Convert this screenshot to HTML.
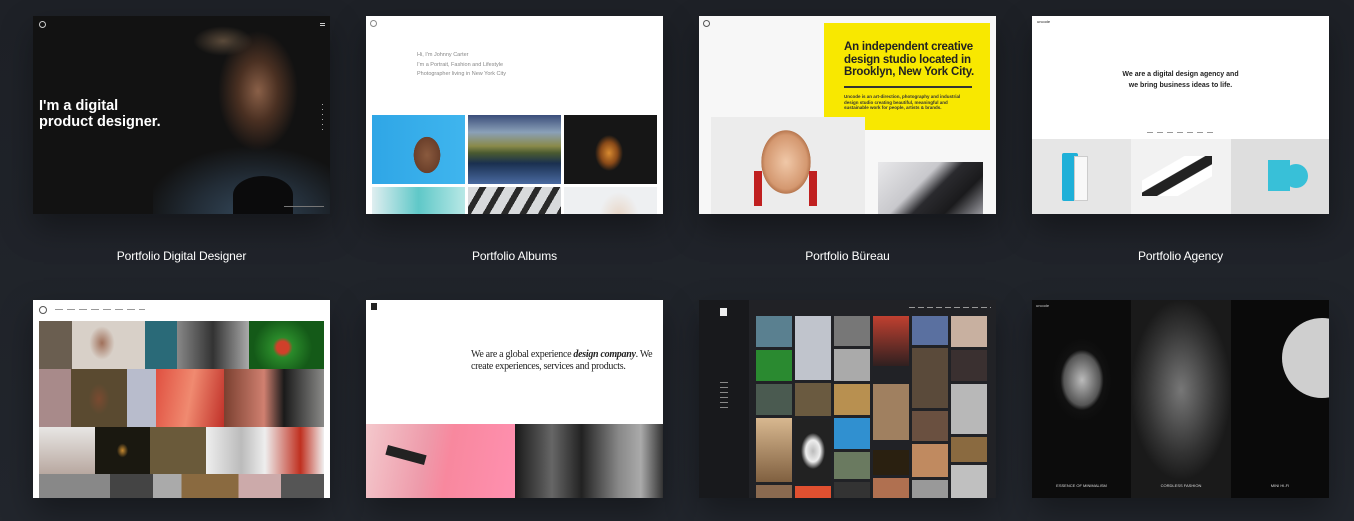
<!DOCTYPE html>
<html><head><meta charset="utf-8"><style>
*{margin:0;padding:0;box-sizing:border-box}
body{width:1354px;height:521px;overflow:hidden;background:linear-gradient(#1e2127,#22262d);font-family:"Liberation Sans",sans-serif;position:relative}
.c{position:absolute;width:297px;height:198px;overflow:hidden;box-shadow:0 14px 30px rgba(0,0,0,.35)}
.a{position:absolute}
.lbl{position:absolute;top:249px;width:297px;text-align:center;color:#fff;font-size:12px;letter-spacing:-.1px}
.t{position:absolute;white-space:nowrap}
</style></head><body>

<!-- Card 1 -->
<div class="c" style="left:33px;top:16px;background:#121212">
 <div class="a" style="left:120px;top:0;width:177px;height:198px;background:radial-gradient(ellipse 40px 60px at 105px 75px,#8a6048 0%,#4a3022 50%,rgba(20,16,14,0) 100%),radial-gradient(ellipse 110px 70px at 100px 200px,#34485a 0%,#222c36 55%,rgba(18,18,18,0) 100%)"></div>
 <div class="a" style="left:160px;top:10px;width:60px;height:30px;border-radius:50%;background:radial-gradient(#5a4a3a,rgba(0,0,0,0) 70%)"></div>
 <div class="a" style="left:200px;top:160px;width:60px;height:38px;border-radius:50% 50% 0 0;background:#0b0b0c"></div>
 <div class="t" style="left:6px;top:82px;color:#fff;font-weight:bold;font-size:14.5px;line-height:16px">I'm a digital<br>product designer.</div>
 <div class="a" style="left:6px;top:5px;width:7px;height:7px;border:1px solid #ccc;border-radius:50%"></div>
 <div class="a" style="left:287px;top:7px;width:5px;height:3px;border-top:1px solid #ccc;border-bottom:1px solid #ccc"></div>
 <div class="a" style="left:289px;top:88px;width:1px;height:26px;background:repeating-linear-gradient(#aaa 0 1px,transparent 1px 5px)"></div>
 <div class="a" style="left:251px;top:190px;width:40px;height:1px;background:#777"></div>
</div>
<div class="lbl" style="left:33px">Portfolio Digital Designer</div>

<!-- Card 2 -->
<div class="c" style="left:366px;top:16px;background:#fff">
 <div class="a" style="left:4px;top:4px;width:7px;height:7px;border:1px solid #888;border-radius:50%"></div>
 <div class="t" style="left:51px;top:35px;color:#888;font-size:5.5px;line-height:9.5px">Hi, I'm Johnny Carter<br>I'm a Portrait, Fashion and Lifestyle<br>Photographer living in New York City</div>
 <div class="a" style="left:6px;top:99px;width:93px;height:69px;background:radial-gradient(ellipse 22px 30px at 55px 40px,#8a5a3e,#6a3f2a 60%,rgba(0,0,0,0) 61%),linear-gradient(90deg,#2fa6e6,#3fb5ee)"></div>
 <div class="a" style="left:102px;top:99px;width:93px;height:69px;background:linear-gradient(#3a4d7a 0%,#8aa0b8 25%,#8a8a4a 45%,#4a5a30 55%,#1a3050 70%,#4a6aa0 100%)"></div>
 <div class="a" style="left:198px;top:99px;width:93px;height:69px;background:radial-gradient(ellipse 14px 18px at 45px 38px,#d88a30,#8a4a18 60%,#161616 100%)"></div>
 <div class="a" style="left:6px;top:171px;width:93px;height:27px;background:linear-gradient(90deg,#dfeef0,#5fc8c8,#b8e8e6)"></div>
 <div class="a" style="left:102px;top:171px;width:93px;height:27px;background:repeating-linear-gradient(120deg,#d8dadc 0 10px,#2a2a2a 10px 16px)"></div>
 <div class="a" style="left:198px;top:171px;width:93px;height:27px;background:radial-gradient(ellipse 20px 25px at 55px 30px,#e8d5c5,#eef0f2)"></div>
</div>
<div class="lbl" style="left:366px">Portfolio Albums</div>

<!-- Card 3 -->
<div class="c" style="left:699px;top:16px;background:#f7f7f7">
 <div class="a" style="left:4px;top:4px;width:7px;height:7px;border:1px solid #555;border-radius:50%"></div>
 <div class="a" style="left:125px;top:7px;width:166px;height:107px;background:#f8e800"></div>
 <div class="t" style="left:145px;top:25px;color:#222;font-weight:bold;font-size:11.5px;line-height:12.5px;letter-spacing:-.2px">An independent creative<br>design studio located in<br>Brooklyn, New York City.</div>
 <div class="a" style="left:145px;top:70px;width:128px;height:1.5px;background:#333"></div>
 <div class="t" style="left:145px;top:78px;color:#333;font-size:4.5px;line-height:5.5px;font-weight:bold">Uncode is an art-direction, photography and industrial<br>design studio creating beautiful, meaningful and<br>sustainable work for people, artists &amp; brands.</div>
 <div class="a" style="left:12px;top:101px;width:154px;height:97px;background:radial-gradient(ellipse 35px 45px at 75px 45px,#f0c8a8,#d49870 60%,#b87850 70%,rgba(0,0,0,0) 71%),#ececec"></div>
 <div class="a" style="left:55px;top:155px;width:8px;height:35px;background:#c02020"></div>
 <div class="a" style="left:110px;top:155px;width:8px;height:35px;background:#c02020"></div>
 <div class="a" style="left:179px;top:146px;width:105px;height:52px;background:linear-gradient(135deg,#e8e8ea 0%,#c8c8cc 40%,#2a2a2e 55%,#1a1a1c 75%,#9a9aa0 100%)"></div>
</div>
<div class="lbl" style="left:699px">Portfolio Büreau</div>

<!-- Card 4 -->
<div class="c" style="left:1032px;top:16px;background:#fff">
 <div class="t" style="left:5px;top:3px;font-size:4px;color:#222">uncode</div>
 <div class="t" style="left:0;width:297px;text-align:center;top:53px;color:#222;font-size:7px;line-height:11px;font-weight:bold">We are a digital design agency and<br>we bring business ideas to life.</div>
 <div class="a" style="left:115px;top:116px;width:70px;height:1px;background:repeating-linear-gradient(90deg,#999 0 6px,transparent 6px 10px)"></div>
 <div class="a" style="left:0;top:123px;width:99px;height:75px;background:#e6e6e6"></div>
 <div class="a" style="left:30px;top:137px;width:16px;height:48px;background:#1fb0d8;border-radius:2px"></div>
 <div class="a" style="left:42px;top:140px;width:14px;height:45px;background:#f8f8f8;border:1px solid #ccc"></div>
 <div class="a" style="left:99px;top:123px;width:100px;height:75px;background:#f2f2f2"></div>
 <div class="a" style="left:110px;top:140px;width:70px;height:40px;background:linear-gradient(150deg,transparent 30%,#fff 31% 45%,#222 46% 60%,#fff 61% 75%,transparent 76%)"></div>
 <div class="a" style="left:199px;top:123px;width:98px;height:75px;background:#dedede"></div>
 <div class="a" style="left:236px;top:144px;width:22px;height:31px;background:#38c0d8"></div>
 <div class="a" style="left:252px;top:148px;width:24px;height:24px;border-radius:50%;background:#38c0d8"></div>
</div>
<div class="lbl" style="left:1032px">Portfolio Agency</div>

<!-- Card 5 -->
<div class="c" style="left:33px;top:300px;background:#fff">
 <div class="a" style="left:6px;top:6px;width:8px;height:8px;border:1px solid #555;border-radius:50%"></div>
 <div class="a" style="left:22px;top:9px;width:90px;height:1px;background:repeating-linear-gradient(90deg,#999 0 8px,transparent 8px 12px)"></div>
 <div class="a" style="left:6px;top:21px;width:33px;height:48px;background:#6a5e50"></div>
 <div class="a" style="left:39px;top:21px;width:73px;height:48px;background:radial-gradient(ellipse 18px 24px at 30px 22px,#a0705a,#d8d0c8 70%)"></div>
 <div class="a" style="left:112px;top:21px;width:32px;height:48px;background:#2a6a78"></div>
 <div class="a" style="left:144px;top:21px;width:72px;height:48px;background:linear-gradient(90deg,#888,#333 50%,#aaa)"></div>
 <div class="a" style="left:216px;top:21px;width:75px;height:48px;background:radial-gradient(circle at 45% 55%,#d0402a 0 6px,#2a8a2a 10px,#145a18 60%)"></div>
 <div class="a" style="left:6px;top:69px;width:32px;height:58px;background:#a88a8a"></div>
 <div class="a" style="left:38px;top:69px;width:56px;height:58px;background:radial-gradient(ellipse 15px 22px at 28px 30px,#7a4a30,#5a4a30 70%)"></div>
 <div class="a" style="left:94px;top:69px;width:29px;height:58px;background:#b8bccc"></div>
 <div class="a" style="left:123px;top:69px;width:68px;height:58px;background:linear-gradient(100deg,#e05040,#f08a70 50%,#c03028)"></div>
 <div class="a" style="left:191px;top:69px;width:100px;height:58px;background:linear-gradient(90deg,#7a4030,#d08070 40%,#1a1a1a 60%,#8a8a88)"></div>
 <div class="a" style="left:6px;top:127px;width:56px;height:47px;background:linear-gradient(#e8e6e4,#b8a8a0)"></div>
 <div class="a" style="left:62px;top:127px;width:55px;height:47px;background:radial-gradient(ellipse 8px 10px,#c88a30,#1a1810 70%)"></div>
 <div class="a" style="left:117px;top:127px;width:56px;height:47px;background:#6a5a3a"></div>
 <div class="a" style="left:173px;top:127px;width:118px;height:47px;background:linear-gradient(90deg,#eee,#bbb 30%,#eee 50%,#c03020 80%,#f0f0f0)"></div>
 <div class="a" style="left:6px;top:174px;width:285px;height:24px;background:linear-gradient(90deg,#888 0 25%,#444 25% 40%,#aaa 40% 50%,#8a6a40 50% 70%,#caa 70% 85%,#555 85%)"></div>
</div>

<!-- Card 6 -->
<div class="c" style="left:366px;top:300px;background:#fff">
 <div class="a" style="left:5px;top:3px;width:6px;height:7px;background:#222"></div>
 <div class="t" style="left:105px;top:49px;font-family:'Liberation Serif',serif;font-size:10px;line-height:11.5px;color:#222;letter-spacing:-.3px">We are a global experience <b><i>design company</i></b>. We<br>create experiences, services and products.</div>
 <div class="a" style="left:0;top:124px;width:149px;height:74px;background:linear-gradient(100deg,#f4c8cc 0%,#ee9aaa 40%,#f8889e 55%,#ff90b0 100%)"></div>
 <div class="a" style="left:20px;top:150px;width:40px;height:10px;background:#222;transform:rotate(15deg)"></div>
 <div class="a" style="left:149px;top:124px;width:148px;height:74px;background:linear-gradient(90deg,#1a1a1a,#666 25%,#222 45%,#888 70%,#aaa 85%,#333)"></div>
</div>

<!-- Card 7 -->
<div class="c" style="left:699px;top:300px;background:#212226">
 <div class="a" style="left:0;top:0;width:50px;height:198px;background:#18191c"></div>
 <div class="a" style="left:21px;top:8px;width:7px;height:8px;background:#eee"></div>
 <div class="a" style="left:21px;top:82px;width:8px;height:30px;background:repeating-linear-gradient(#888 0 1px,transparent 1px 5px)"></div>
 <div class="a" style="left:210px;top:7px;width:82px;height:1px;background:repeating-linear-gradient(90deg,#999 0 6px,transparent 6px 9px)"></div>
 <div class="a" style="left:57px;top:16px;width:36px;height:31px;background:#5a8090"></div>
 <div class="a" style="left:57px;top:50px;width:36px;height:31px;background:#2a8a30"></div>
 <div class="a" style="left:57px;top:84px;width:36px;height:31px;background:#4a5a50"></div>
 <div class="a" style="left:57px;top:118px;width:36px;height:64px;background:linear-gradient(#d8b890,#806040)"></div>
 <div class="a" style="left:57px;top:185px;width:36px;height:13px;background:#8a6a50"></div>
 <div class="a" style="left:96px;top:16px;width:36px;height:64px;background:#c0c4cc"></div>
 <div class="a" style="left:96px;top:83px;width:36px;height:33px;background:#6a5a40"></div>
 <div class="a" style="left:96px;top:119px;width:36px;height:64px;background:radial-gradient(ellipse 12px 18px,#bbb,#eee 60%,#222)"></div>
 <div class="a" style="left:96px;top:186px;width:36px;height:12px;background:#e05030"></div>
 <div class="a" style="left:135px;top:16px;width:36px;height:30px;background:#777"></div>
 <div class="a" style="left:135px;top:49px;width:36px;height:32px;background:#aaa"></div>
 <div class="a" style="left:135px;top:84px;width:36px;height:31px;background:#b89050"></div>
 <div class="a" style="left:135px;top:118px;width:36px;height:31px;background:#3090d0"></div>
 <div class="a" style="left:135px;top:152px;width:36px;height:27px;background:#6a7a60"></div>
 <div class="a" style="left:135px;top:182px;width:36px;height:16px;background:#333"></div>
 <div class="a" style="left:174px;top:16px;width:36px;height:50px;background:linear-gradient(#c04030,#302020)"></div>
 <div class="a" style="left:174px;top:84px;width:36px;height:56px;background:#a08060"></div>
 <div class="a" style="left:174px;top:150px;width:36px;height:25px;background:#2a2010"></div>
 <div class="a" style="left:174px;top:178px;width:36px;height:20px;background:#b07050"></div>
 <div class="a" style="left:213px;top:16px;width:36px;height:29px;background:#5a70a0"></div>
 <div class="a" style="left:213px;top:48px;width:36px;height:60px;background:#5a4a3a"></div>
 <div class="a" style="left:213px;top:111px;width:36px;height:30px;background:#6a5040"></div>
 <div class="a" style="left:213px;top:144px;width:36px;height:33px;background:#c08a60"></div>
 <div class="a" style="left:213px;top:180px;width:36px;height:18px;background:#999"></div>
 <div class="a" style="left:252px;top:16px;width:36px;height:31px;background:#c8b0a0"></div>
 <div class="a" style="left:252px;top:50px;width:36px;height:31px;background:#3a3030"></div>
 <div class="a" style="left:252px;top:84px;width:36px;height:50px;background:#b8b8b8"></div>
 <div class="a" style="left:252px;top:137px;width:36px;height:25px;background:#8a6a40"></div>
 <div class="a" style="left:252px;top:165px;width:36px;height:33px;background:#c0c0c0"></div>
</div>

<!-- Card 8 -->
<div class="c" style="left:1032px;top:300px;background:#0c0c0c">
 <div class="a" style="left:0;top:0;width:99px;height:198px;background:radial-gradient(ellipse 30px 42px at 50px 80px,#bbb,#555 60%,#111 72%,#0c0c0c)"></div>
 <div class="a" style="left:99px;top:0;width:100px;height:198px;background:radial-gradient(ellipse 50px 90px at 50px 90px,#777,#333 70%,#1a1a1a)"></div>
 <div class="a" style="left:199px;top:0;width:98px;height:198px;background:#0a0a0a"></div>
 <div class="a" style="left:250px;top:18px;width:80px;height:80px;border-radius:50%;background:#cfcfcf"></div>
 <div class="t" style="left:4px;top:3px;font-size:4px;color:#ccc">uncode</div>
 <div class="t" style="left:0;width:99px;text-align:center;top:183px;font-size:4px;color:#ddd">ESSENCE OF MINIMALISM</div>
 <div class="t" style="left:99px;width:100px;text-align:center;top:183px;font-size:4px;color:#ddd">CORDLESS FASHION</div>
 <div class="t" style="left:199px;width:98px;text-align:center;top:183px;font-size:4px;color:#ddd">MINI HI-FI</div>
</div>

</body></html>
